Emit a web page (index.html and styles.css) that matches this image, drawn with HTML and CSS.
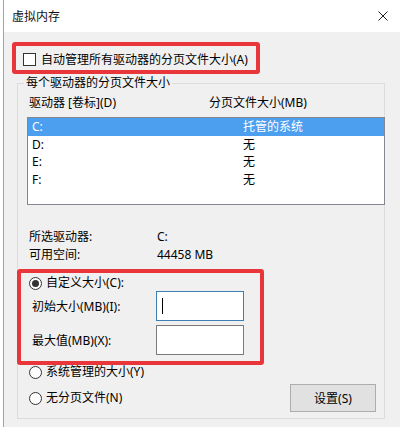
FILE: index.html
```html
<!DOCTYPE html>
<html lang="zh-CN">
<head>
  <meta charset="UTF-8">
  <title>虚拟内存</title>
  <link rel="stylesheet" href="styles.css">
</head>
<body>
  <div class="window">
    <div class="titlebar">
      <span class="title">虚拟内存</span>
      <svg class="close" width="10" height="10" viewBox="0 0 10 10">
        <path d="M0.5 0.5 L9.5 9.5 M9.5 0.5 L0.5 9.5" stroke="#222" stroke-width="1" fill="none"/>
      </svg>
    </div>

    <div class="content">
      <!-- 自动管理 -->
      <div class="mark auto-box">
        <span class="checkbox"></span>
        <span>自动管理所有驱动器的分页文件大小(A)</span>
      </div>

      <fieldset class="group">
        <legend>每个驱动器的分页文件大小</legend>

        <div class="list-head">
          <span class="col-drive">驱动器 [卷标](D)</span>
          <span>分页文件大小(MB)</span>
        </div>

        <div class="listbox">
          <div class="row selected"><span class="col-name">C:</span><span>托管的系统</span></div>
          <div class="row"><span class="col-name">D:</span><span>无</span></div>
          <div class="row"><span class="col-name">E:</span><span>无</span></div>
          <div class="row"><span class="col-name">F:</span><span>无</span></div>
        </div>

        <div class="info first">
          <span class="info-label">所选驱动器:</span>
          <span>C:</span>
        </div>
        <div class="info">
          <span class="info-label">可用空间:</span>
          <span>44458 MB</span>
        </div>

        <!-- 自定义大小 -->
        <div class="mark custom-box">
          <div class="option">
            <span class="radio checked"></span>
            <span>自定义大小(C):</span>
          </div>
          <div class="field">
            <span class="field-label">初始大小(MB)(I):</span>
            <span class="textbox focused"><span class="caret"></span></span>
          </div>
          <div class="field">
            <span class="field-label">最大值(MB)(X):</span>
            <span class="textbox"></span>
          </div>
        </div>

        <div class="option outer">
          <span class="radio"></span>
          <span>系统管理的大小(Y)</span>
        </div>
        <div class="bottom-row">
          <div class="option outer">
            <span class="radio"></span>
            <span>无分页文件(N)</span>
          </div>
          <button class="btn" type="button">设置(S)</button>
        </div>
      </fieldset>
    </div>
  </div>
</body>
</html>
```

FILE: styles.css
```css
* {
  box-sizing: border-box;
}
body {
  margin: 0;
  background: #fff;
  font-family: "Noto Sans", "Noto Sans CJK SC", sans-serif;
  font-size: 12px;
  color: #000;
}
.window {
  margin-left: 3px;
  height: 427px;
  border-left: 1px solid #7aaee0;
  overflow: hidden;
}
.titlebar {
  height: 32px;
  background: #fff;
  display: flex;
  align-items: center;
  justify-content: space-between;
  padding: 0 12px 0 8px;
}
.title {
  font-size: 12px;
  color: #111;
}
.content {
  background: #f0f0f0;
  height: 395px;
  padding-top: 10px;
}

/* red highlight boxes */
.mark {
  border: 4px solid #e8363b;
  border-radius: 3px;
}
.auto-box {
  margin-left: 8px;
  width: 248px;
  height: 32px;
  display: flex;
  align-items: center;
  gap: 5px;
  padding: 2px 0 0 7px;
}
.checkbox {
  width: 13px;
  height: 13px;
  border: 1px solid #333;
  background: #fff;
}

.group {
  margin: 1px 0 0 13px;
  width: 368px;
  border: 1px solid #dcdcdc;
  padding: 0 0 6px 9px;
  min-width: 0;
}
.group legend {
  padding: 0 2px;
  margin-left: -3px;
  line-height: 16px;
}
.list-head {
  display: flex;
  padding: 4px 0 0 2px;
  line-height: 16px;
}
.col-drive {
  width: 180px;
}
.listbox {
  margin: 6px -1px 0 0;
  height: 88px;
  border: 1px solid #828790;
  background: #fff;
}
.row {
  display: flex;
  height: 17.5px;
  line-height: 17.5px;
  padding-left: 4px;
}
.row.selected {
  background: #4c9eef;
  color: #fff;
}
.col-name {
  width: 211px;
}
.info {
  display: flex;
  line-height: 18px;
  padding-left: 2px;
}
.info.first {
  margin-top: 23px;
}
.info-label {
  width: 128px;
}

.custom-box {
  margin: 5px 0 0 -10px;
  width: 247px;
  height: 96px;
  padding-top: 2px;
}
.option {
  display: flex;
  align-items: center;
  gap: 4px;
  line-height: 16px;
  padding-left: 8px;
}
.option.outer {
  padding-left: 2px;
  line-height: 14px;
}
.radio {
  width: 13px;
  height: 13px;
  border: 1px solid #333;
  border-radius: 50%;
  background: #fff;
  display: flex;
  align-items: center;
  justify-content: center;
}
.radio.checked::after {
  content: "";
  width: 7px;
  height: 7px;
  border-radius: 50%;
  background: #333;
}
.field {
  display: flex;
  align-items: center;
  padding-left: 11px;
}
.field + .field {
  margin-top: 4px;
}
.field-label {
  width: 124px;
}
.textbox {
  width: 88px;
  height: 30px;
  border: 1px solid #7a7a7a;
  background: #fff;
  display: flex;
  align-items: center;
  padding-left: 5px;
}
.textbox.focused {
  border-color: #3d7eb5;
}
.caret {
  width: 1px;
  height: 16px;
  background: #000;
}
.bottom-row {
  display: flex;
  align-items: center;
  justify-content: space-between;
  margin-top: 5px;
  padding-right: 8px;
}
.btn {
  width: 86px;
  height: 28px;
  background: #e1e1e1;
  border: 1px solid #adadad;
  font-family: inherit;
  font-size: 12px;
  color: #000;
  padding: 0;
}
```
